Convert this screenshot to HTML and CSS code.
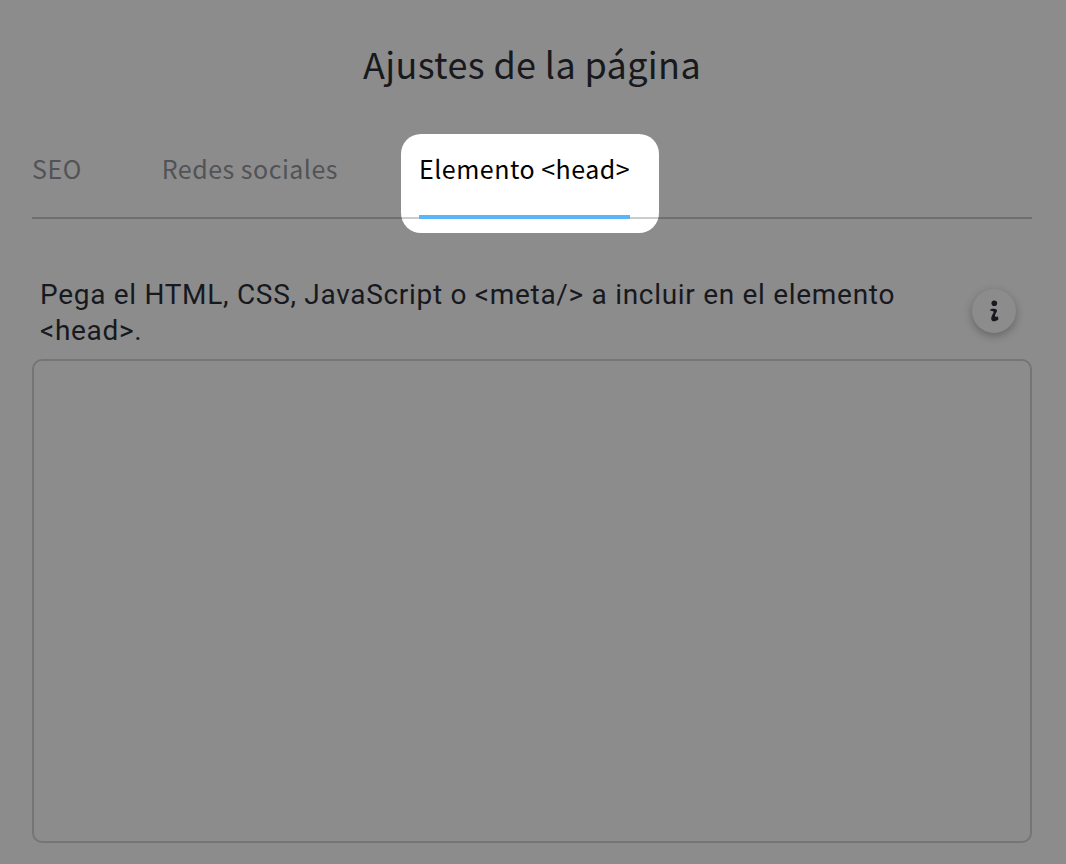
FILE: index.html
```html
<!DOCTYPE html>
<html lang="es">
<head>
<meta charset="utf-8">
<title>Ajustes de la página</title>
<link rel="stylesheet" href="styles.css">
</head>
<body>
<main class="page">
  <h1 class="title">Ajustes de la página</h1>
  <nav class="tabs">
    <a class="tab">SEO</a>
    <a class="tab">Redes sociales</a>
    <a class="tab tab-active"><span class="tab-label">Elemento &lt;head&gt;</span></a>
  </nav>
  <section class="field">
    <div class="field-head">
      <p class="field-label">Pega el HTML, CSS, JavaScript o &lt;meta/&gt; a incluir en el elemento &lt;head&gt;.</p>
      <button class="info" aria-label="Información">
        <svg class="info-icon" width="12" height="22" viewBox="0 0 12 22"><circle cx="6.3" cy="3.2" r="2.8"/><path d="M2 10.4 L2.6 9.2 C4.5 8.8 7.5 8.6 8.6 9.4 C9.4 10.2 8.8 11.8 8 13 C7.2 14.3 6.8 15.6 7.2 16.4 C7.8 17 9 16.8 10 16.4 L10.4 19.4 C8.6 20.8 6 21.8 4.4 21 C2.8 20 3 18 3.8 16 C4.5 14.4 5.6 13 5.6 12 C5.6 11 3.8 10.8 2 10.4 Z"/></svg>
      </button>
    </div>
    <textarea class="input"></textarea>
  </section>
</main>
</body>
</html>
```
FILE: styles.css
```css
* { box-sizing: border-box; }
html, body { margin: 0; height: 100%; }
body { background: #8c8c8c; overflow: hidden; }
.page {
  width: 1066px;
  height: 864px;
  padding: 0 34px 0 32px;
  background: #8c8c8c;
}
.title {
  margin: 0;
  padding-top: 36px;
  height: 134px;
  text-align: center;
  font: 400 36px/54px "Noto Sans CJK SC", sans-serif;
  letter-spacing: .36px;
  color: #17191c;
}
.tabs {
  display: flex;
  gap: 80px;
  height: 85px;
  border-bottom: 2px solid #6f6f6f;
  align-items: flex-start;
}
.tab {
  font: 400 25px/36px "Noto Sans CJK SC", sans-serif;
  color: #515356;
  padding-top: 16px;
  letter-spacing: .5px;
}
.tab-active {
  position: relative;
  z-index: 2;
  margin-left: -17px;
  padding: 16px 29px 0 18px;
  height: 99px;
  width: 258px;
  background: linear-gradient(#fff 83px, #cdcdcd 83px, #cdcdcd 85px, #fff 85px);
  border-radius: 20px;
  color: #000;
}
.tab-label {
  display: block;
  height: 69px;
  border-bottom: 4px solid #58b6f9;
  white-space: nowrap;
}
.field { margin-top: 58px; }
.field-head {
  display: flex;
  justify-content: space-between;
  align-items: flex-start;
  padding-left: 8px;
  padding-right: 16px;
}
.field-label {
  margin: 0;
  width: 880px;
  font: 400 28px/36px Roboto, sans-serif;
  letter-spacing: .7px;
  color: #17191e;
}
.info {
  width: 44px;
  height: 44px;
  margin-top: 12px;
  padding: 0;
  border: 0;
  border-radius: 50%;
  background: #8c8c8c;
  box-shadow: 0 3px 8px rgba(0,0,0,.28);
  display: flex;
  align-items: center;
  justify-content: center;
}
.info-icon { fill: #17191c; }
.input {
  display: block;
  width: 1000px;
  height: 484px;
  margin-top: 10px;
  background: #8c8c8c;
  border: 2px solid #757575;
  border-radius: 10px;
  resize: none;
}
```
